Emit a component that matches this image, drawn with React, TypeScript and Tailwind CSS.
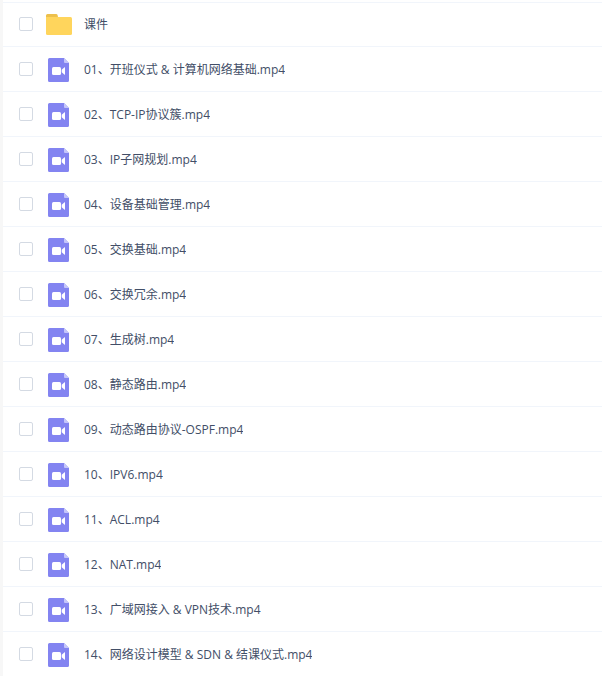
type FileItem = {
  name: string
  type: 'folder' | 'video'
}

const FILES: FileItem[] = [
  { name: '课件', type: 'folder' },
  { name: '01、开班仪式 & 计算机网络基础.mp4', type: 'video' },
  { name: '02、TCP-IP协议簇.mp4', type: 'video' },
  { name: '03、IP子网规划.mp4', type: 'video' },
  { name: '04、设备基础管理.mp4', type: 'video' },
  { name: '05、交换基础.mp4', type: 'video' },
  { name: '06、交换冗余.mp4', type: 'video' },
  { name: '07、生成树.mp4', type: 'video' },
  { name: '08、静态路由.mp4', type: 'video' },
  { name: '09、动态路由协议-OSPF.mp4', type: 'video' },
  { name: '10、IPV6.mp4', type: 'video' },
  { name: '11、ACL.mp4', type: 'video' },
  { name: '12、NAT.mp4', type: 'video' },
  { name: '13、广域网接入 & VPN技术.mp4', type: 'video' },
  { name: '14、网络设计模型 & SDN & 结课仪式.mp4', type: 'video' },
]

function FolderIcon() {
  return (
    <svg width="26" height="22" viewBox="0 0 26 22" aria-hidden="true">
      <path d="M0 1.5A1.5 1.5 0 0 1 1.5 0h8.7c.6 0 1 .2 1.3.7L12 3v5H0z" fill="#edc04c" />
      <path d="M0 3h24.5A1.5 1.5 0 0 1 26 4.5v15a1.5 1.5 0 0 1-1.5 1.5h-23A1.5 1.5 0 0 1 0 19.5z" fill="#ffd55c" />
    </svg>
  )
}

function VideoIcon() {
  return (
    <svg width="22" height="24" viewBox="0 0 22 24" aria-hidden="true">
      <path d="M1.5 0H16l5 5v17.5a1.5 1.5 0 0 1-1.5 1.5h-18A1.5 1.5 0 0 1 0 22.5v-21A1.5 1.5 0 0 1 1.5 0z" fill="#8384f1" />
      <path d="M16 0l5 5h-4a1 1 0 0 1-1-1z" fill="#c5c6fa" />
      <rect x="4" y="9" width="9" height="8" rx="1.5" fill="#fff" />
      <path d="M17 9.6v6.8c0 .4-.4.5-.7.2L13.700 14.200v-2.400l2.600-2.400c.3-.3.7-.2.7.2z" fill="#fff" />
    </svg>
  )
}

function FileRow({ file }: { file: FileItem }) {
  return (
    <li className="border-b border-[#f1f5fb]">
      <label className="flex h-11 items-center pl-4">
        <input
          type="checkbox"
          className="mr-[13px] size-3.5 shrink-0 appearance-none rounded-xs border border-[#d4dae3] bg-white checked:border-[#06a7ff] checked:bg-[#06a7ff]"
        />
        <span className="flex min-w-0 items-center pt-0.5">
          <span className="flex w-[26px] shrink-0 justify-center">
            {file.type === 'folder' ? <FolderIcon /> : <VideoIcon />}
          </span>
          <span className="ml-3 truncate text-xs text-[#424e67]">{file.name}</span>
        </span>
      </label>
    </li>
  )
}

export default function App() {
  return (
    <div className="min-h-screen border-l-3 border-[#f7f7f7] bg-white font-['Open_Sans','Noto_Sans_CJK_SC',sans-serif]">
      <div className="h-[3px] border-b border-[#f1f5fb]" />
      <ul className="-mt-px">
        {FILES.map((file) => (
          <FileRow key={file.name} file={file} />
        ))}
      </ul>
    </div>
  )
}
